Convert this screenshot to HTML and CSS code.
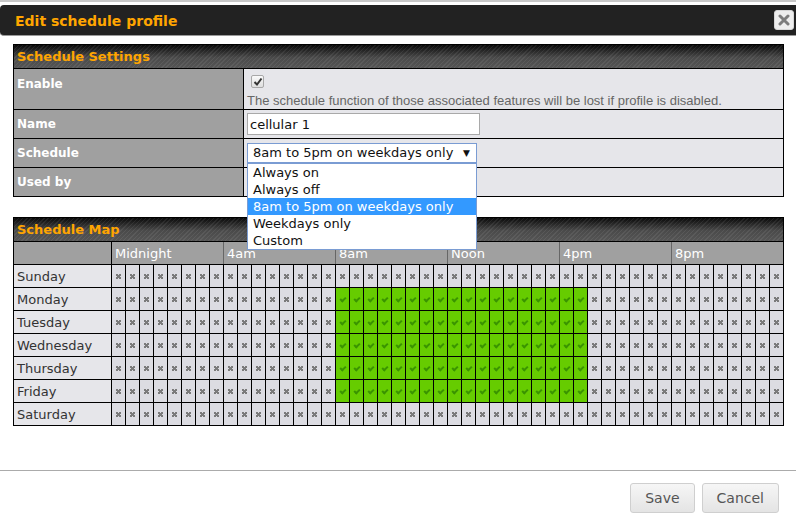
FILE: index.html
```html
<!DOCTYPE html>
<html lang="en">
<head>
  <meta charset="UTF-8" />
  <meta name="viewport" content="width=device-width, initial-scale=1.0" />
  <title>Edit schedule profile</title>
  <link rel="stylesheet" href="styles.css">
</head>
<body>
  <div class="topline"></div>
  <div class="titlebar">
    <span class="title">Edit schedule profile</span>
    <button class="close" type="button">
      <svg width="12" height="12" viewBox="0 0 12 12"><path d="M2 2 L10 10 M10 2 L2 10" stroke="#7d7d7d" stroke-width="3" stroke-linecap="round"/></svg>
    </button>
  </div>

  <div class="content">
    <div class="settings">
      <div class="bar">Schedule Settings</div>

      <div class="label label-top">Enable</div>
      <div class="value value-top">
        <span class="check">
          <svg width="10" height="10" viewBox="0 0 10 10"><path d="M1.5 5 L4 7.5 L8.5 1.5" fill="none" stroke="#333" stroke-width="2"/></svg>
        </span>
        <p class="note">The schedule function of those associated features will be lost if profile is disabled.</p>
      </div>

      <div class="label">Name</div>
      <div class="value"><input class="text" type="text" value="cellular 1" /></div>

      <div class="label">Schedule</div>
      <div class="value">
        <div class="select-wrap">
          <div class="select">8am to 5pm on weekdays only<span class="arrow">&#9660;</span></div>
          <ul class="options">
            <li>Always on</li>
            <li>Always off</li>
            <li class="selected">8am to 5pm on weekdays only</li>
            <li>Weekdays only</li>
            <li>Custom</li>
          </ul>
        </div>
      </div>

      <div class="label">Used by</div>
      <div class="value"></div>
    </div>

    <div class="map" id="map">
      <div class="bar">Schedule Map</div>
      <div class="hour-corner"></div>
      <div class="hour">Midnight</div>
      <div class="hour">4am</div>
      <div class="hour">8am</div>
      <div class="hour">Noon</div>
      <div class="hour">4pm</div>
      <div class="hour">8pm</div>
    </div>
  </div>

  <div class="footer">
    <button class="btn" type="button">Save</button>
    <button class="btn" type="button">Cancel</button>
  </div>

  <script>
    const days = ["Sunday", "Monday", "Tuesday", "Wednesday", "Thursday", "Friday", "Saturday"];
    const map = document.getElementById("map");

    days.forEach((day, d) => {
      const label = document.createElement("div");
      label.className = "day";
      label.textContent = day;
      map.appendChild(label);

      for (let i = 0; i < 48; i++) {
        const cell = document.createElement("div");
        // weekdays, 8am to 5pm (half hour slots 16..33)
        const on = d >= 1 && d <= 5 && i >= 16 && i <= 33;
        cell.className = on ? "cell on" : "cell off";
        map.appendChild(cell);
      }
    });
  </script>
</body>
</html>
```

FILE: styles.css
```css
body { margin: 0; background: #fff; font-family: "DejaVu Sans", Verdana, sans-serif; font-size: 13px; color: #222; }

.topline { height: 2px; background: #c8c8c8; margin-bottom: 3px; }

.titlebar { height: 30px; background: #222; border-bottom: 1px solid #9a9a9a; border-radius: 4px 0 0 4px; display: flex; align-items: center; justify-content: space-between; padding: 0 2px 0 15px; }
.title { color: #ffa500; font-weight: bold; font-size: 14px; padding-top: 1px; }
.close { width: 20px; height: 20px; padding: 0; border: 1px solid #d6d6d6; border-radius: 3px; background: #eeeeee; display: flex; align-items: center; justify-content: center; }

.content { padding: 8px 0 0 13px; }

.bar { grid-column: 1 / -1; color: #ffa500; font-weight: bold; font-size: 13px; padding-left: 3px; display: flex; align-items: center;
  background: repeating-linear-gradient(135deg, rgba(255,255,255,0.07) 0 1px, transparent 1px 3px), linear-gradient(#0a0a0a, #4a4a4a 55%, #555); }

.settings { width: 771px; box-sizing: border-box; display: grid; grid-template-columns: 229px 1fr; grid-template-rows: 23px 40px 28px 28px 28px; gap: 1px; padding: 1px; background: #000; }
.label { background: #a0a0a0; color: #fff; font-weight: bold; font-size: 12px; padding-left: 3px; display: flex; align-items: center; }
.label-top { align-items: flex-start; padding-top: 8px; }
.value { background: #e6e6ea; padding-left: 3px; display: flex; align-items: center; }
.value-top { flex-direction: column; align-items: flex-start; padding-top: 6px; }

.check { width: 11px; height: 11px; margin-left: 4px; border: 1px solid #a8a8a8; border-radius: 2px; background: linear-gradient(#fafafa, #dedede); display: flex; align-items: center; justify-content: center; }
.note { margin: 5px 0 0; font-family: "Liberation Sans", Arial, sans-serif; font-size: 13px; color: #666; }

.text { width: 233px; height: 22px; box-sizing: border-box; margin: 0; border: 1px solid #a9a9a9; background: #fff; font-family: "DejaVu Sans", Verdana, sans-serif; font-size: 13px; color: #111; padding: 0 2px; }

.select-wrap { position: relative; }
.select { width: 230px; height: 20px; box-sizing: border-box; border: 1px solid #7a9cd3; background: #fff; padding-left: 5px; line-height: 18px; position: relative; color: #111; }
.arrow { position: absolute; right: 6px; top: 0; font-size: 9px; color: #111; }
.options { position: absolute; left: 0; top: 20px; width: 230px; box-sizing: border-box; margin: 0; padding: 0; list-style: none; background: #fff; border: 1px solid #7a9cd3; z-index: 2; }
.options li { height: 17px; line-height: 17px; padding-left: 5px; color: #111; }
.options .selected { background: #3399ff; color: #fff; }

.map { margin-top: 20px; width: 771px; box-sizing: border-box; display: grid; grid-template-columns: 97px repeat(48, 13px); grid-template-rows: 23px; grid-auto-rows: 22px; gap: 1px; padding: 1px; background: #000; }
.hour-corner { background: #a0a0a0; }
.hour { grid-column: span 8; background: #a0a0a0; color: #fff; padding-left: 3px; display: flex; align-items: center; }
.hour + .hour { box-shadow: -1px 0 0 #666; }
.day { background: #e6e6ea; padding-left: 3px; display: flex; align-items: center; color: #333; }

.cell { position: relative; }
.cell.off { background-color: #dcdce2; background-repeat: no-repeat; background-position: 4px 9px; background-size: 5px 5px;
  background-image: linear-gradient(45deg, transparent 38%, #7b7b7b 38%, #7b7b7b 62%, transparent 62%), linear-gradient(-45deg, transparent 38%, #7b7b7b 38%, #7b7b7b 62%, transparent 62%); }
.cell.on { background: #66cc00; }
.cell.on::after { content: ""; position: absolute; left: 5px; top: 8px; width: 2px; height: 4px; border: solid #3a9400; border-width: 0 2px 2px 0; transform: rotate(45deg); }

.footer { margin-top: 44px; border-top: 1px solid #ababab; padding: 12px 17px 0 0; display: flex; justify-content: flex-end; gap: 7px; }
.btn { height: 30px; padding: 0 14px; border: 1px solid #cfcfcf; border-radius: 3px; background: linear-gradient(#f6f6f6, #e4e4e4); color: #555; font-family: "DejaVu Sans", Verdana, sans-serif; font-size: 14px; }
```
